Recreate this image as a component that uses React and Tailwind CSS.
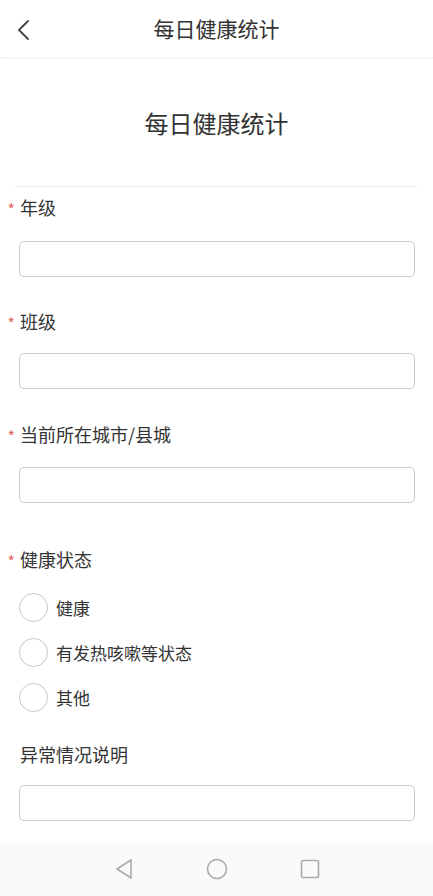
import React from 'react';

const font = { fontFamily: '"Noto Sans CJK SC", "Noto Sans", sans-serif' };

const FieldLabel = ({ text, required = true, className = '' }) => (
    <div className={`flex items-center h-[24px] ${className}`}>
        <span className="w-[20px] pr-[5px] pt-[3px] text-right text-[16px] leading-none text-[#e0675b]">
            {required ? '*' : ''}
        </span>
        <span className="text-[18px] leading-[24px] text-[#333]">{text}</span>
    </div>
);

const TextBox = ({ className = '' }) => (
    <div className={`ml-[19px] mr-[18px] h-[36px] rounded-[5px] border border-[#c9c9c9] bg-white ${className}`} />
);

const Radio = ({ label }) => (
    <div className="flex items-center h-[29px] pl-[19px]">
        <span className="w-[29px] h-[29px] rounded-full border border-[#c6c6c6] bg-white" />
        <span className="ml-[8px] text-[17px] text-[#333]">{label}</span>
    </div>
);

export default function App() {
    return (
        <div className="w-[433px] h-[896px] bg-white flex flex-col overflow-hidden" style={font}>
            {/* Header */}
            <div className="relative h-[58px] flex items-center justify-center border-b border-[#f2f2f2] shadow-[0_1px_2px_rgba(0,0,0,0.03)]">
                <svg className="absolute left-[16px] top-[19px]" width="16" height="22" viewBox="0 0 16 22" fill="none">
                    <path d="M12 2 L3 11 L12 20" stroke="#444" strokeWidth="1.8" strokeLinecap="round" strokeLinejoin="round" />
                </svg>
                <span className="text-[21px] text-[#333]">每日健康统计</span>
            </div>

            {/* Page title */}
            <div className="pt-[49px] pb-[47px] text-center text-[24px] leading-[32px] text-[#333]">每日健康统计</div>
            <div className="mx-[15px] h-px bg-[#ebebeb]" />

            {/* Form */}
            <FieldLabel text="年级" className="mt-[8px]" />
            <TextBox className="mt-[22px]" />

            <FieldLabel text="班级" className="mt-[32px]" />
            <TextBox className="mt-[20px]" />

            <FieldLabel text="当前所在城市/县城" className="mt-[33px]" />
            <TextBox className="mt-[21px]" />

            <FieldLabel text="健康状态" className="mt-[44px]" />
            <div className="mt-[22px] flex flex-col gap-[16px]">
                <Radio label="健康" />
                <Radio label="有发热咳嗽等状态" />
                <Radio label="其他" />
            </div>

            <FieldLabel text="异常情况说明" required={false} className="mt-[30px]" />
            <TextBox className="mt-[19px]" />

            <div className="flex-1" />

            {/* Android nav bar */}
            <div className="h-[53px] bg-[#fafafa] flex items-center justify-center gap-[72px] pb-[2px]">
                <svg width="20" height="22" viewBox="0 0 20 22" fill="none">
                    <path d="M17 2 L3 11 L17 20 Z" stroke="#aaa" strokeWidth="1.6" strokeLinejoin="round" />
                </svg>
                <svg width="22" height="22" viewBox="0 0 22 22" fill="none">
                    <circle cx="11" cy="11" r="9.5" stroke="#aaa" strokeWidth="1.6" />
                </svg>
                <svg width="20" height="20" viewBox="0 0 20 20" fill="none">
                    <rect x="1.5" y="1.5" width="17" height="17" rx="1.5" stroke="#aaa" strokeWidth="1.6" />
                </svg>
            </div>
        </div>
    );
}
